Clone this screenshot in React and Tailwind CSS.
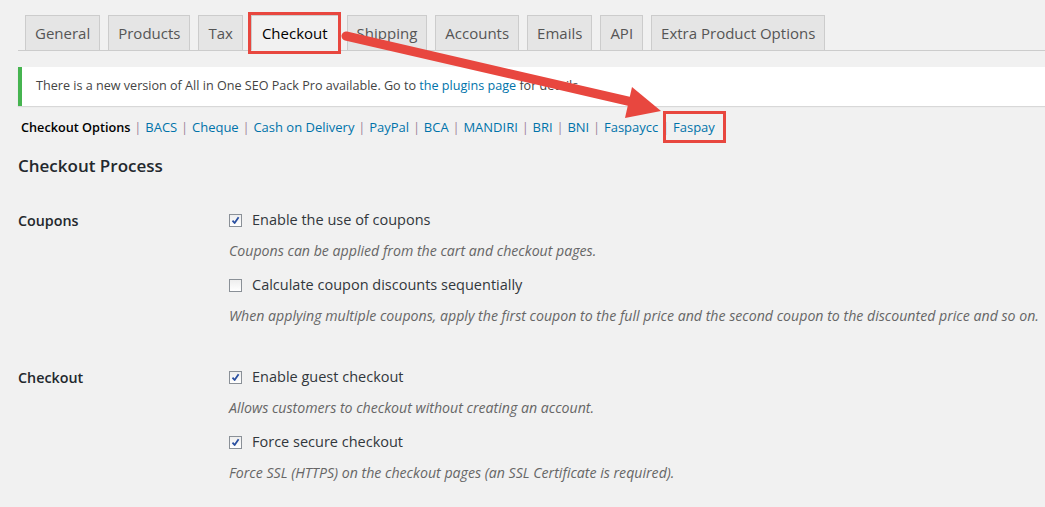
const tabs = ["General", "Products", "Tax", "Checkout", "Shipping", "Accounts", "Emails", "API", "Extra Product Options"];

const sections = ["BACS", "Cheque", "Cash on Delivery", "PayPal", "BCA", "MANDIRI", "BRI", "BNI", "Faspaycc", "Faspay"];

function Checkbox({ checked }) {
  return (
    <span className="flex h-[13px] w-[13px] shrink-0 items-center justify-center border border-[#8a9097] bg-gradient-to-b from-[#eee] to-white">
      {checked && (
        <svg width="9" height="9" viewBox="0 0 9 9">
          <path d="M1.5 4.6 L3.6 7 L7.6 1.3" fill="none" stroke="#2a4fa0" strokeWidth="1.8" strokeLinejoin="round" />
        </svg>
      )}
    </span>
  );
}

function Option({ checked, label, desc, first }) {
  return (
    <div className={first ? "" : "mt-[14px]"}>
      <label className="flex h-[20px] items-center gap-[10px] text-[14.5px] text-[#32373c]">
        <Checkbox checked={checked} />
        {label}
      </label>
      <p className="mt-[11px] h-[20px] whitespace-nowrap text-[14.15px] italic leading-[20px] text-[#666]">{desc}</p>
    </div>
  );
}

function Row({ title, options, className }) {
  return (
    <div className={`flex ${className}`}>
      <div className="w-[211px] shrink-0 pt-[1px] text-[14.3px] font-semibold leading-[20px] text-[#23282d]">{title}</div>
      <div>
        {options.map((o, i) => (
          <Option key={o.label} {...o} first={i === 0} />
        ))}
      </div>
    </div>
  );
}

export default function App() {
  return (
    <div className="relative h-[507px] w-[1045px] overflow-hidden bg-[#f1f1f1] pl-[18px] font-['Open_Sans',sans-serif]">
      {/* tabs */}
      <div className="flex gap-[8px] border-b border-[#ccc] pl-[7px] pt-[15px]">
        {tabs.map((t) =>
          t === "Checkout" ? (
            <div key={t} className="relative">
              <div className="-mb-px flex h-[36px] items-center border border-[#ccc] border-b-[#f1f1f1] bg-[#f1f1f1] px-[10px] text-[15px] text-black">
                {t}
              </div>
              <div className="absolute -left-[3px] -right-[2px] -top-[3px] -bottom-[4px] border-[3px] border-[#e8473f]" />
            </div>
          ) : (
            <div key={t} className="flex h-[35px] items-center border border-b-0 border-[#ccc] bg-[#e5e5e5] px-[9px] text-[15px] text-[#555]">
              {t}
            </div>
          )
        )}
      </div>

      {/* notice */}
      <div className="mt-[16px] flex h-[39px] items-center border-l-4 border-[#46b450] bg-white pl-[14px] text-[12.6px] text-[#444] shadow-[0_1px_1px_rgba(0,0,0,0.1)]">
        There is a new version of All in One SEO Pack Pro available. Go to&nbsp;
        <span className="text-[#0073aa]">the plugins page</span>&nbsp;for details.
      </div>

      {/* sub nav */}
      <div className="mt-[11px] flex h-[20px] items-center pl-[3px] text-[13px] leading-[20px]">
        <span className="text-[12.7px] font-semibold text-black">Checkout Options</span>
        {sections.map((s) => (
          <span key={s} className="flex items-center">
            <span className="mx-[3.8px] text-[#a0849c]">|</span>
            {s === "Faspay" ? (
              <span className="relative text-[#0073aa]">
                {s}
                <span className="absolute -left-[10px] -right-[11px] -top-[6px] -bottom-[6px] border-[3px] border-[#e8473f]" />
              </span>
            ) : (
              <span className="text-[#0073aa]">{s}</span>
            )}
          </span>
        ))}
      </div>

      <h2 className="mt-[17px] h-[24px] text-[17px] font-semibold leading-[24px] text-[#23282d]">Checkout Process</h2>

      <Row
        className="mt-[32px]"
        title="Coupons"
        options={[
          { checked: true, label: "Enable the use of coupons", desc: "Coupons can be applied from the cart and checkout pages." },
          {
            checked: false,
            label: "Calculate coupon discounts sequentially",
            desc: "When applying multiple coupons, apply the first coupon to the full price and the second coupon to the discounted price and so on.",
          },
        ]}
      />
      <Row
        className="mt-[41px]"
        title="Checkout"
        options={[
          { checked: true, label: "Enable guest checkout", desc: "Allows customers to checkout without creating an account." },
          { checked: true, label: "Force secure checkout", desc: "Force SSL (HTTPS) on the checkout pages (an SSL Certificate is required)." },
        ]}
      />

      {/* annotation arrow */}
      <svg className="pointer-events-none absolute left-0 top-0" width="1045" height="507">
        <line x1="346" y1="36" x2="632" y2="102" stroke="#e8473f" strokeWidth="9" strokeLinecap="round" />
        <polygon points="632,87 661,111 625,118" fill="#e8473f" />
      </svg>
    </div>
  );
}
